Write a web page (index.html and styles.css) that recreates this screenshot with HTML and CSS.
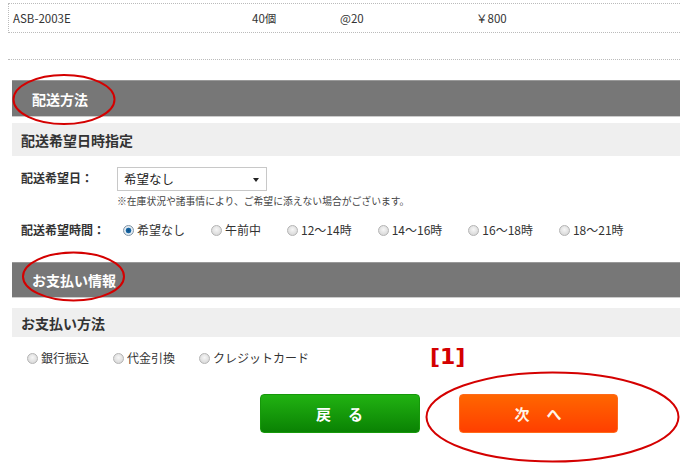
FILE: index.html
```html
<!DOCTYPE html>
<html lang="ja">
<head>
<meta charset="utf-8">
<title>配送方法・お支払い情報</title>
<link rel="stylesheet" href="styles.css">
</head>
<body>
<div class="page">
  <div class="order-row">
    <span class="c-code">ASB-2003E</span>
    <span class="c-qty">40個</span>
    <span class="c-unit">@20</span>
    <span class="c-price">￥800</span>
  </div>
  <div class="order-sep"></div>

  <div class="main">
    <h2 class="bar bar-first">配送方法</h2>
    <h3 class="sub sub-first">配送希望日時指定</h3>

    <div class="field field-date">
      <span class="field-label">配送希望日：</span>
      <div class="field-body">
        <div class="select"><span>希望なし</span><span class="select-arrow"></span></div>
        <p class="note">※在庫状況や諸事情により、ご希望に添えない場合がございます。</p>
      </div>
    </div>

    <div class="field field-time">
      <span class="field-label">配送希望時間：</span>
      <div class="options time">
        <label class="opt"><input type="radio" name="time" checked><span>希望なし</span></label>
        <label class="opt"><input type="radio" name="time"><span>午前中</span></label>
        <label class="opt"><input type="radio" name="time"><span>12～14時</span></label>
        <label class="opt"><input type="radio" name="time"><span>14～16時</span></label>
        <label class="opt"><input type="radio" name="time"><span>16～18時</span></label>
        <label class="opt"><input type="radio" name="time"><span>18～21時</span></label>
      </div>
    </div>

    <h2 class="bar bar-second">お支払い情報</h2>
    <h3 class="sub sub-second">お支払い方法</h3>

    <div class="options pay">
      <label class="opt"><input type="radio" name="pay"><span>銀行振込</span></label>
      <label class="opt"><input type="radio" name="pay"><span>代金引換</span></label>
      <label class="opt"><input type="radio" name="pay"><span>クレジットカード</span></label>
    </div>

    <div class="actions">
      <button class="btn btn-back" type="button">戻　る</button>
      <button class="btn btn-next" type="button">次　へ</button>
    </div>
  </div>

  <span class="mark">[1]</span>
  <svg class="annot" width="680" height="470" viewBox="0 0 680 470" aria-hidden="true">
    <ellipse cx="64" cy="96.5" rx="50.5" ry="24.5"/>
    <ellipse cx="73.5" cy="273.5" rx="50.5" ry="24"/>
    <ellipse cx="552.5" cy="414" rx="126" ry="44.5"/>
  </svg>
</div>
</body>
</html>
```

FILE: styles.css
```css
* { box-sizing: border-box; }
html, body { margin: 0; padding: 0; background: #fff; }
body {
  font-family: "Noto Sans CJK JP", "Liberation Sans", sans-serif;
  color: #333;
  font-size: 12px;
  overflow: hidden;
}
.page { position: relative; width: 680px; height: 470px; }

.order-row {
  margin: 3px 0 0 8px;
  height: 30px;
  border-top: 1px dotted #bbb;
  border-bottom: 1px dotted #bbb;
  border-left: 1px dotted #bbb;
  display: grid;
  grid-template-columns: 239px 88px 136px 1fr;
  align-items: center;
  padding-left: 4px;
  font-size: 11.5px;
  line-height: 16px;
  color: #333;
}
.order-sep {
  margin: 26px 0 0 8px;
  border-top: 1px dotted #bbb;
}

.main { margin-left: 12px; }

.bar {
  margin: 0;
  background: #777;
  color: #fff;
  font-size: 14px;
  font-weight: bold;
  line-height: 20px;
  padding: 0 0 0 20px;
  display: flex;
  align-items: center;
  border-top: 1px solid #999;
  border-bottom: 1px solid #ccc;
}
.bar-first { margin-top: 20px; height: 37px; }
.bar-second { margin-top: 22px; height: 36px; }

.sub {
  margin: 0;
  background: #efefef;
  color: #333;
  font-size: 14px;
  font-weight: bold;
  padding-left: 9px;
  display: flex;
  align-items: center;
  line-height: 20px;
}
.sub-first { margin-top: 6px; height: 33px; }
.sub-second { margin-top: 10px; height: 29px; }

.field { display: flex; padding-left: 9px; }
.field-label {
  width: 96px;
  flex: none;
  font-weight: bold;
  font-size: 12px;
  line-height: 20px;
  color: #333;
}
.field-date { margin-top: 11px; }
.field-date .field-label { margin-top: 1px; }
.field-time { margin-top: 11px; align-items: center; }

.select {
  width: 150px;
  height: 24px;
  border: 1px solid #c8c8c8;
  background: #fff;
  display: flex;
  align-items: center;
  justify-content: space-between;
  padding: 0 7px 0 6px;
  font-size: 12.5px;
  color: #222;
  line-height: 18px;
}
.select-arrow {
  width: 0; height: 0;
  border-left: 3.5px solid transparent;
  border-right: 3.5px solid transparent;
  border-top: 4px solid #222;
  margin-top: 1px;
}
.note {
  margin: 2px 0 0;
  font-size: 9.8px;
  line-height: 16px;
  color: #444;
}

.options { display: flex; align-items: center; gap: 18px; }
.options.time { gap: 20px; }
.opt {
  display: flex;
  align-items: center;
  gap: 3px;
  font-size: 12px;
  line-height: 20px;
  color: #333;
}
.opt input {
  -webkit-appearance: none;
  appearance: none;
  margin: 0 0 0 6px;
  width: 11px;
  height: 11px;
  border-radius: 50%;
  border: 1px solid #b4b4b4;
  background: radial-gradient(circle at 50% 40%, #f6f6f6 0, #dcdcdc 70%, #c8c8c8 100%);
  flex: none;
}
.opt input:checked {
  border-color: #8295a6;
  background: radial-gradient(circle at 50% 50%, #0e4f86 0, #1a6aa8 2.5px, #e6eef5 3.2px, #d2dbe3 100%);
}
.pay { margin-top: 11px; padding-left: 9px; }

.actions {
  display: flex;
  gap: 39px;
  margin-top: 26px;
  padding-left: 248px;
}
.btn {
  width: 160px;
  height: 39px;
  border-radius: 4px;
  font-family: "Noto Sans CJK JP", sans-serif;
  font-weight: bold;
  font-size: 15px;
  color: #fff;
  padding: 0;
  letter-spacing: 1px;
}
.btn-back {
  background: linear-gradient(#21b212, #0a8203);
  border: 1px solid #16980a;
}
.btn-next {
  width: 159px;
  background: linear-gradient(#ff6600, #ff3f00);
  border: 1px solid #ff6a1a;
  color: #fff6ea;
}

.mark {
  position: absolute;
  left: 430px;
  top: 339px;
  font-family: "DejaVu Sans", sans-serif;
  font-weight: bold;
  font-size: 22px;
  line-height: 30px;
  color: #d40000;
}
.annot {
  position: absolute;
  left: 0;
  top: 0;
  pointer-events: none;
}
.annot ellipse {
  fill: none;
  stroke: #d40000;
  stroke-width: 2;
}
```
